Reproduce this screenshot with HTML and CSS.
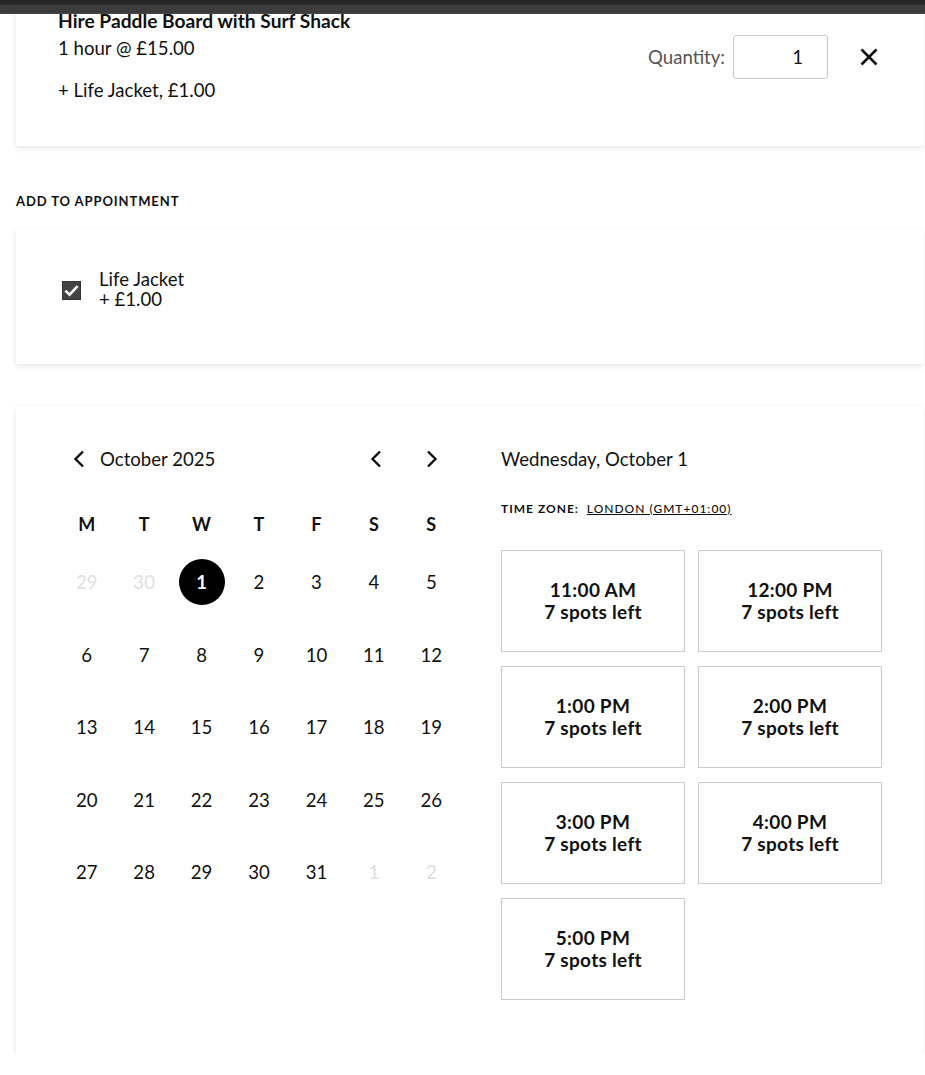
FILE: index.html
```html
<!DOCTYPE html>
<html lang="en">
<head>
<meta charset="utf-8">
<title>Booking</title>
<link rel="stylesheet" href="styles.css">
</head>
<body>
<div class="topbar"></div>
<main class="page">
  <section class="card item-card">
    <div class="item-info">
      <h2 class="item-title">Hire Paddle Board with Surf Shack</h2>
      <p class="item-price">1 hour @ £15.00</p>
      <p class="item-addon">+ Life Jacket, £1.00</p>
    </div>
    <div class="item-actions">
      <label class="qty-label" for="qty">Quantity:</label>
      <input class="qty-input" id="qty" type="text" value="1">
      <button class="icon-btn remove-btn" aria-label="Remove">
        <svg width="20" height="20" viewBox="0 0 20 20"><path d="M2.5 2.5 L17.5 17.5 M17.5 2.5 L2.5 17.5" stroke="#111" stroke-width="2.6" stroke-linecap="butt" fill="none"/></svg>
      </button>
    </div>
  </section>

  <h3 class="section-label">ADD TO APPOINTMENT</h3>

  <section class="card addon-card">
    <label class="addon">
      <span class="checkbox">
        <svg width="19" height="19" viewBox="0 0 19 19"><rect x="0.5" y="0.5" width="18" height="18" fill="#444" stroke="#333"/><path d="M3.4 9.6 L7.6 13.6 L15.6 5.2" stroke="#fff" stroke-width="2.6" fill="none"/></svg>
      </span>
      <span class="addon-text">
        <span>Life Jacket</span>
        <span>+ £1.00</span>
      </span>
    </label>
  </section>

  <section class="card booking-card">
    <div class="calendar">
      <div class="cal-header">
        <div class="cal-month">
          <button class="icon-btn nav-btn" aria-label="Back">
            <svg width="14" height="20" viewBox="0 0 14 20"><path d="M11 2.5 L3.5 10 L11 17.5" stroke="#111" stroke-width="2.4" fill="none"/></svg>
          </button>
          <span class="month-name">October 2025</span>
        </div>
        <div class="cal-nav">
          <button class="icon-btn nav-btn" aria-label="Previous month">
            <svg width="14" height="20" viewBox="0 0 14 20"><path d="M11 2.5 L3.5 10 L11 17.5" stroke="#111" stroke-width="2.4" fill="none"/></svg>
          </button>
          <button class="icon-btn nav-btn" aria-label="Next month">
            <svg width="14" height="20" viewBox="0 0 14 20"><path d="M3 2.5 L10.5 10 L3 17.5" stroke="#111" stroke-width="2.4" fill="none"/></svg>
          </button>
        </div>
      </div>
      <div class="weekdays">
        <span>M</span><span>T</span><span>W</span><span>T</span><span>F</span><span>S</span><span>S</span>
      </div>
      <div class="days">
        <span class="day muted">29</span><span class="day muted">30</span><span class="day selected">1</span><span class="day">2</span><span class="day">3</span><span class="day">4</span><span class="day">5</span>
        <span class="day">6</span><span class="day">7</span><span class="day">8</span><span class="day">9</span><span class="day">10</span><span class="day">11</span><span class="day">12</span>
        <span class="day">13</span><span class="day">14</span><span class="day">15</span><span class="day">16</span><span class="day">17</span><span class="day">18</span><span class="day">19</span>
        <span class="day">20</span><span class="day">21</span><span class="day">22</span><span class="day">23</span><span class="day">24</span><span class="day">25</span><span class="day">26</span>
        <span class="day">27</span><span class="day">28</span><span class="day">29</span><span class="day">30</span><span class="day">31</span><span class="day muted">1</span><span class="day muted">2</span>
      </div>
    </div>
    <div class="times">
      <div class="date-title">Wednesday, October 1</div>
      <div class="timezone">TIME ZONE: <a href="#" class="tz-link">LONDON (GMT+01:00)</a></div>
      <div class="slots">
        <button class="slot"><span>11:00 AM</span><span>7 spots left</span></button>
        <button class="slot"><span>12:00 PM</span><span>7 spots left</span></button>
        <button class="slot"><span>1:00 PM</span><span>7 spots left</span></button>
        <button class="slot"><span>2:00 PM</span><span>7 spots left</span></button>
        <button class="slot"><span>3:00 PM</span><span>7 spots left</span></button>
        <button class="slot"><span>4:00 PM</span><span>7 spots left</span></button>
        <button class="slot"><span>5:00 PM</span><span>7 spots left</span></button>
      </div>
    </div>
  </section>
</main>
</body>
</html>
```

FILE: styles.css
```css
* { box-sizing: border-box; }

html, body {
  margin: 0;
  padding: 0;
  background: #fff;
}

body {
  font-family: Lato, "Noto Sans", sans-serif;
  color: #111;
  overflow: hidden;
}

.topbar {
  position: fixed;
  top: 0;
  left: 0;
  right: 0;
  height: 14px;
  background: linear-gradient(#262626 0, #262626 4px, #3f3f3f 5px, #3a3a3a 13px, #555 14px);
  z-index: 10;
}

.page {
  width: 908px;
  margin-left: 16px;
  display: flex;
  flex-direction: column;
}

.card {
  background: #fff;
  box-shadow: 0 2px 6px rgba(0, 0, 0, 0.1);
}

button {
  font-family: inherit;
  background: none;
  border: 0;
  padding: 0;
  cursor: pointer;
  color: inherit;
}

.icon-btn {
  display: flex;
  align-items: center;
  justify-content: center;
}

/* Item card */
.item-card {
  height: 146px;
  padding: 9px 33px 0 42px;
  display: flex;
  justify-content: space-between;
  align-items: flex-start;
}

.item-title {
  margin: 0;
  font-size: 19.2px;
  font-weight: 700;
  line-height: 24px;
}

.item-price {
  margin: 3px 0 0;
  font-size: 18.6px;
  line-height: 24px;
}

.item-addon {
  margin: 18px 0 0;
  font-size: 18.6px;
  line-height: 24px;
}

.item-actions {
  display: flex;
  align-items: center;
  margin-top: 26px;
}

.qty-label {
  font-size: 18.6px;
  color: #555;
  margin-right: 8px;
}

.qty-input {
  width: 95px;
  height: 44px;
  border: 1px solid #c8c8c8;
  border-radius: 3px;
  font-family: inherit;
  font-size: 18.6px;
  text-align: right;
  padding: 0 24px 0 8px;
  color: #111;
}

.remove-btn {
  width: 44px;
  height: 44px;
  margin-left: 19px;
}

/* Section label */
.section-label {
  margin: 47px 0 0;
  font-size: 13px;
  font-weight: 700;
  letter-spacing: 0.9px;
  line-height: 16px;
  color: #111;
}

/* Add-on card */
.addon-card {
  margin-top: 20px;
  height: 135px;
  padding: 40px 42px 0 46px;
}

.addon {
  display: flex;
  align-items: center;
  gap: 18px;
}

.checkbox {
  display: flex;
  margin-top: 2px;
}

.addon-text {
  display: flex;
  flex-direction: column;
  font-size: 18.6px;
  line-height: 20px;
}

/* Booking card */
.booking-card {
  margin-top: 42px;
  height: 647px;
  padding: 31px 43px 0 42px;
  display: flex;
  gap: 41px;
}

.calendar {
  width: 402px;
  flex: none;
}

.cal-header {
  height: 44px;
  display: flex;
  align-items: center;
  justify-content: space-between;
  padding-right: 6px;
}

.cal-month {
  display: flex;
  align-items: center;
}

.nav-btn {
  width: 44px;
  height: 44px;
}

.cal-month .nav-btn {
  width: 42px;
}

.month-name {
  font-size: 18.6px;
}

.cal-nav {
  display: flex;
  gap: 12px;
}

.weekdays {
  margin-top: 21px;
  display: grid;
  grid-template-columns: repeat(7, 1fr);
  height: 44px;
  align-items: center;
}

.weekdays span {
  text-align: center;
  font-size: 18px;
  font-weight: 700;
}

.days {
  display: grid;
  grid-template-columns: repeat(7, 1fr);
  grid-auto-rows: 72.5px;
}

.day {
  display: flex;
  align-items: center;
  justify-content: center;
  font-size: 18.6px;
}

.day.muted {
  color: #e0e0e0;
}

.day.selected {
  color: #fff;
  font-weight: 700;
  position: relative;
  z-index: 0;
}

.day.selected::before {
  content: "";
  position: absolute;
  width: 46px;
  height: 46px;
  border-radius: 50%;
  background: #000;
  left: 50%;
  top: 50%;
  transform: translate(-50%, -50%);
  z-index: -1;
}

/* Times */
.times {
  flex: 1;
}

.date-title {
  height: 44px;
  display: flex;
  align-items: center;
  font-size: 18.6px;
}

.timezone {
  margin-top: 20px;
  font-size: 12px;
  font-weight: 700;
  letter-spacing: 1px;
  line-height: 16px;
  color: #111;
}

.tz-link {
  color: #111;
  font-weight: 500;
  margin-left: 4px;
  text-decoration: underline;
}

.slots {
  margin-top: 33px;
  display: grid;
  grid-template-columns: 184px 184px;
  column-gap: 13px;
  row-gap: 14px;
}

.slot {
  height: 102px;
  border: 1px solid #ccc;
  display: flex;
  flex-direction: column;
  align-items: center;
  justify-content: center;
  font-size: 19px;
  font-weight: 700;
  line-height: 22px;
  letter-spacing: 0.3px;
  color: #111;
}
```
